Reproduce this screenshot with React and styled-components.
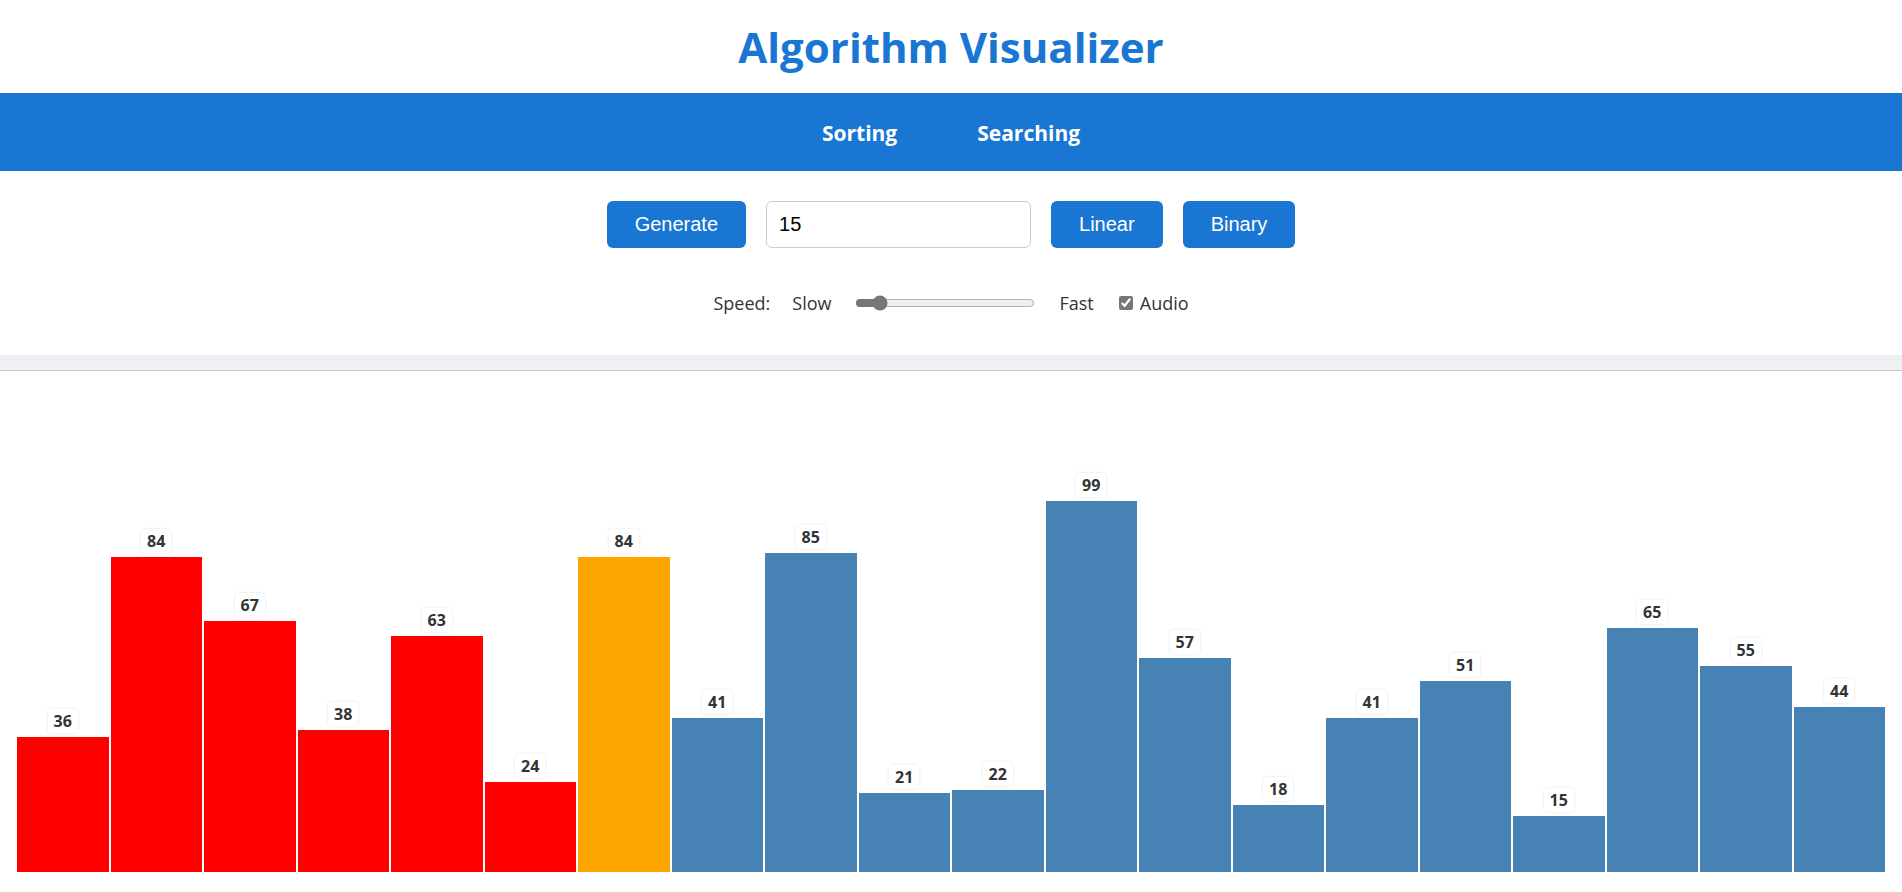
import React from 'react';
import styled, { createGlobalStyle } from 'styled-components';

const GlobalStyle = createGlobalStyle`
  html, body {
    margin: 0;
    padding: 0;
    background: #fff;
    font-family: "Open Sans", "Noto Sans", sans-serif;
    color: #333;
  }
`;

const Page = styled.div`
  display: flex;
  flex-direction: column;
  min-height: 892px;
`;

const Title = styled.h1`
  margin: 0;
  padding: 19px 0 18px;
  line-height: 56px;
  font-size: 42px;
  font-weight: 700;
  text-align: center;
  color: #1976d2;
`;

const Nav = styled.nav`
  display: flex;
  justify-content: center;
  align-items: center;
  gap: 80px;
  height: 78px;
  background: #1976d2;
`;

const NavLink = styled.a`
  color: #fff;
  font-size: 21px;
  font-weight: 700;
  text-decoration: none;
  cursor: pointer;
  padding-top: 2px;
`;

const Controls = styled.section`
  display: flex;
  flex-direction: column;
  align-items: center;
  padding: 30px 0 0;
  height: 184px;
  box-sizing: border-box;
`;

const Row = styled.div`
  display: flex;
  align-items: center;
  justify-content: center;
  gap: 20px;
`;

const Button = styled.button`
  font-family: "Liberation Sans", Arial, sans-serif;
  font-size: 20px;
  line-height: 23px;
  padding: 12px 28px;
  border: none;
  border-radius: 6px;
  background: #1976d2;
  color: #fff;
  cursor: pointer;
`;

const TextInput = styled.input`
  font-family: "Liberation Sans", Arial, sans-serif;
  font-size: 20px;
  width: 265px;
  height: 47px;
  box-sizing: border-box;
  padding: 0 12px;
  border: 1px solid #ccc;
  border-radius: 6px;
  color: #000;
  outline: none;
`;

const SpeedRow = styled(Row)`
  margin-top: 43px;
  font-size: 18px;
  color: #333;
  line-height: 24px;
`;

const SpeedLabel = styled.span`
  margin-right: 2px;
`;

const Slider = styled.input`
  width: 180px;
  margin: 2px 4px;
  accent-color: #777;
`;

const CheckLabel = styled.label`
  display: flex;
  align-items: center;
  gap: 7px;
  margin-left: 5px;
`;

const Checkbox = styled.input`
  margin: 0;
  width: 14px;
  height: 14px;
  accent-color: #777;
`;

const Divider = styled.div`
  height: 15px;
  background: linear-gradient(#eceef1, #f1f2f4);
  border-bottom: 1px solid #c9c9cd;
`;

const Chart = styled.div`
  display: grid;
  grid-template-columns: repeat(20, 1fr);
  column-gap: 2px;
  align-items: end;
  height: 501px;
  padding: 0 17px 20px;
`;

const Column = styled.div`
  display: flex;
  flex-direction: column;
  align-items: center;
  justify-content: flex-end;
  height: 100%;
`;

const Label = styled.span`
  font-size: 16px;
  font-weight: 700;
  line-height: 20px;
  padding: 2px 6px;
  margin-bottom: 4px;
  color: #333;
  background: #fff;
  border-radius: 4px;
  box-shadow: 0 0 3px rgba(0, 0, 0, 0.12);
`;

const colors = {
  checked: '#ff0000',
  current: '#ffa500',
  idle: '#4682b4',
};

const Bar = styled.div`
  width: 100%;
  background: ${(p) => colors[p.state]};
`;

const values = [36, 84, 67, 38, 63, 24, 84, 41, 85, 21, 22, 99, 57, 18, 41, 51, 15, 65, 55, 44];

const stateOf = (i) => (i < 6 ? 'checked' : i === 6 ? 'current' : 'idle');

export default function App() {
  return (
    <Page>
      <GlobalStyle />
      <Title>Algorithm Visualizer</Title>
      <Nav>
        <NavLink>Sorting</NavLink>
        <NavLink>Searching</NavLink>
      </Nav>
      <Controls>
        <Row>
          <Button>Generate</Button>
          <TextInput defaultValue="15" />
          <Button>Linear</Button>
          <Button>Binary</Button>
        </Row>
        <SpeedRow>
          <SpeedLabel>Speed:</SpeedLabel>
          <span>Slow</span>
          <Slider type="range" min="0" max="100" defaultValue="10" />
          <span>Fast</span>
          <CheckLabel>
            <Checkbox type="checkbox" defaultChecked />
            Audio
          </CheckLabel>
        </SpeedRow>
      </Controls>
      <Divider />
      <Chart>
        {values.map((v, i) => (
          <Column key={i}>
            <Label>{v}</Label>
            <Bar state={stateOf(i)} style={{ height: `${v * 3.75}px` }} />
          </Column>
        ))}
      </Chart>
    </Page>
  );
}
